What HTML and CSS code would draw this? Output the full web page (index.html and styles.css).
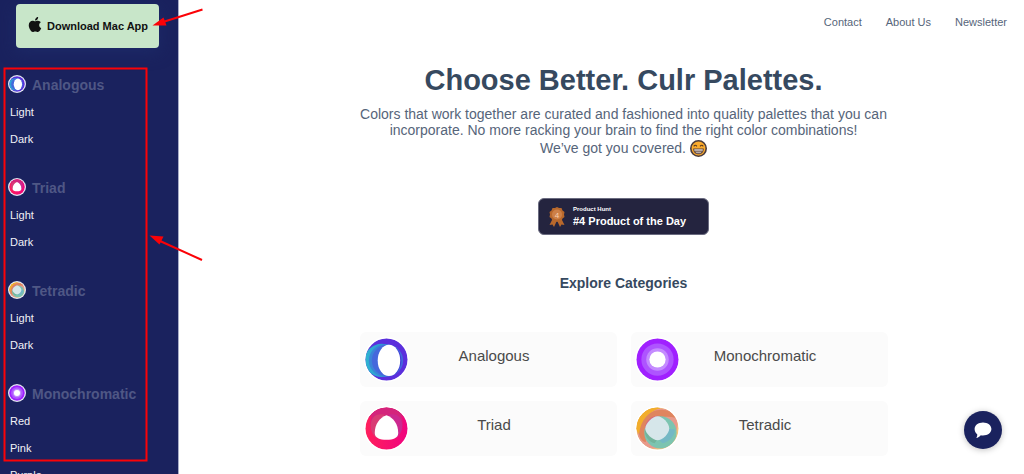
FILE: index.html
```html
<!DOCTYPE html>
<html lang="en">
<head>
  <meta charset="UTF-8" />
  <meta name="viewport" content="width=device-width, initial-scale=1.0">
  <title>Culr Palettes</title>
  <link rel="stylesheet" href="styles.css">
</head>
<body>

  <!-- Shared icons -->
  <svg class="sprite" aria-hidden="true">
    <defs>
      <linearGradient id="blueRing" x1="0" y1="0" x2="1" y2="0">
        <stop offset="0" stop-color="#2fb5d0" />
        <stop offset="1" stop-color="#2f7fd8" />
      </linearGradient>
      <linearGradient id="pinkRing" x1="0" y1="0" x2="1" y2="0">
        <stop offset="0" stop-color="#ff1f5c" />
        <stop offset="1" stop-color="#f0047f" />
      </linearGradient>
      <clipPath id="disc"><circle cx="22" cy="22" r="21.5" /></clipPath>
    </defs>
    <symbol id="analogous" viewBox="0 0 44 44">
      <circle cx="22" cy="22" r="21.5" fill="#5b2fdc" />
      <g clip-path="url(#disc)">
        <ellipse cx="17" cy="23" rx="17.5" ry="17" fill="url(#blueRing)" />
        <ellipse cx="21" cy="23" rx="17" ry="16.500" fill="#3a84d8" />
        <ellipse cx="23" cy="23" rx="16" ry="16" fill="#4468dc" />
        <path d="M30 9c9 6 10 20 1 28 4-8 4-20-1-28z" fill="#3f3fd8" />
      </g>
      <ellipse cx="24.500" cy="23" rx="11.500" ry="16" fill="#fff" />
    </symbol>
    <symbol id="triad" viewBox="0 0 44 44">
      <circle cx="22" cy="22" r="21.500" fill="url(#pinkRing)" />
      <g clip-path="url(#disc)">
        <path d="M3 12C9-3 35-3 41 12c-5-5-12-8-19-8S8 7 3 12z" fill="#d4247c" />
        <circle cx="22" cy="16" r="16.500" fill="#d4247c" />
        <path d="M6 17C7 9 13 6 21 8 12 13 9 22 12 32 7 28 5 22 6 17z" fill="#d83c74" />
        <path d="M38 17C37 9 31 6 23 8c9 5 12 14 9 24 5-4 7-10 6-15z" fill="#cc2890" />
      </g>
      <path d="M22 8.500c7 2.500 12 9 12 18 0 5-5 7-12 7s-12-2-12-7c0-9 5-15.500 12-18z" fill="#fff" />
    </symbol>
    <symbol id="monochromatic" viewBox="0 0 44 44">
      <circle cx="22" cy="22" r="21.500" fill="#a020ff" />
      <circle cx="22" cy="22" r="16.500" fill="#ae54ff" />
      <circle cx="22" cy="22" r="11.500" fill="#c48bff" />
      <circle cx="22" cy="22" r="8.300" fill="#fff" />
    </symbol>
    <symbol id="tetradic" viewBox="0 0 44 44">
      <circle cx="22" cy="22" r="21.500" fill="#f2c37c" />
      <g clip-path="url(#disc)">
        <path d="M0 22C0 6 12-2 25 1L9 17 3 30z" fill="#f2ad2c" />
        <circle cx="26" cy="18" r="16.500" fill="#e89a8c" />
        <circle cx="18" cy="26" r="16.500" fill="#e89a8c" />
        <path d="M3 27C3 14 13 2 28 3c7 0 10 4 12 8-14-4-28 2-30 25-4-1-6-4-7-9z" fill="#df855e" />
        <path d="M0 22C0 6 12-2 25 1 14 4 5 12 3 28z" fill="#f2ad2c" />
        <circle cx="25" cy="26" r="16.500" fill="#7cc4b0" />
        <path d="M9 22c1-8 6-13 14-13-3 3-8 8-9 13z" fill="#d66a80" />
        <path d="M33 22l7 1c-1 8-7 13-13 14l-4-4c6-1 9-5 10-11z" fill="#74b8c4" />
        <path d="M9 24c0 7 5 12 10 13l3-4c-6-1-9-5-11-11z" fill="#72b49c" />
      </g>
      <path d="M22 9.500c5 0 12 7 12 12.500S27 34 22 34 9.500 27 9.500 22 17 9.500 22 9.500z" fill="#d6e6ea" />
    </symbol>
  </svg>

  <aside class="sidebar">
    <button class="download" type="button">
      <svg class="apple" viewBox="0 0 384 512" aria-hidden="true">
        <path fill="currentColor" d="M319 269c0-37 16-64 50-84-19-27-47-42-85-45-36-3-75 21-89 21-15 0-50-20-77-20C62 142 4 186 4 275c0 26 5 54 14 82 13 37 59 127 107 125 25-1 43-18 76-18 32 0 48 18 76 18 49-1 90-82 102-119-65-31-60-91-60-94zM262 105c27-33 25-62 24-73-24 1-52 16-68 35-17 20-28 45-25 72 26 2 49-11 69-34z" />
      </svg>
      Download Mac App
    </button>

    <nav class="groups" aria-label="Palettes">
      <section class="group">
        <h3><svg class="dot"><use href="#analogous" /></svg>Analogous</h3>
        <ul>
          <li><a href="#">Light</a></li>
          <li><a href="#">Dark</a></li>
        </ul>
      </section>
      <section class="group">
        <h3><svg class="dot"><use href="#triad" /></svg>Triad</h3>
        <ul>
          <li><a href="#">Light</a></li>
          <li><a href="#">Dark</a></li>
        </ul>
      </section>
      <section class="group">
        <h3><svg class="dot"><use href="#tetradic" /></svg>Tetradic</h3>
        <ul>
          <li><a href="#">Light</a></li>
          <li><a href="#">Dark</a></li>
        </ul>
      </section>
      <section class="group">
        <h3><svg class="dot"><use href="#monochromatic" /></svg>Monochromatic</h3>
        <ul>
          <li><a href="#">Red</a></li>
          <li><a href="#">Pink</a></li>
          <li><a href="#">Purple</a></li>
        </ul>
      </section>
    </nav>
  </aside>

  <div class="page">
    <nav class="top-nav">
      <a href="#">Contact</a>
      <a href="#">About Us</a>
      <a href="#">Newsletter</a>
    </nav>

    <main class="content">
      <h1>Choose Better. Culr Palettes.</h1>
      <p class="intro">Colors that work together are curated and fashioned into quality palettes that you can incorporate. No more racking your brain to find the right color combinations!</p>
      <p class="covered">
        We’ve got you covered.
        <svg class="grin" viewBox="0 0 32 32" aria-hidden="true">
          <circle cx="16" cy="16" r="14.500" fill="#fbab2c" stroke="#4a3b3d" stroke-width="3" />
          <path d="M7 12q3-4 6 0M19 12q3-4 6 0" fill="none" stroke="#5a3a20" stroke-width="2" />
          <path d="M6 16h20c0 7-4 11-10 11S6 23 6 16z" fill="#5b4038" />
          <path d="M8 17h16v4H8zM10 22h12l-2 3h-8z" fill="#b8aaa4" />
        </svg>
      </p>

      <a class="badge" href="#">
        <svg class="medal" viewBox="0 0 32 40" aria-hidden="true">
          <path d="M8 22L1 36l6-1 3 5 6-13 6 13 3-5 6 1-7-14z" fill="#b8682c" />
          <path d="M16 0l4 2 5 0 2 5 4 3-1 5 1 5-4 3-2 5-5 0-4 2-4-2-5 0-2-5-4-3 1-5-1-5 4-3 2-5 5 0z" fill="#b8682c" />
          <circle cx="16" cy="15" r="10" fill="#cd8048" />
          <text x="16" y="21" text-anchor="middle">4</text>
        </svg>
        <span class="badge-text">
          <small>Product Hunt</small>
          <strong>#4 Product of the Day</strong>
        </span>
      </a>

      <h2>Explore Categories</h2>
      <div class="cards">
        <a class="card" href="#"><svg><use href="#analogous" /></svg><span>Analogous</span></a>
        <a class="card" href="#"><svg><use href="#monochromatic" /></svg><span>Monochromatic</span></a>
        <a class="card" href="#"><svg><use href="#triad" /></svg><span>Triad</span></a>
        <a class="card" href="#"><svg><use href="#tetradic" /></svg><span>Tetradic</span></a>
      </div>
    </main>
  </div>

  <button class="chat" type="button" aria-label="Chat">
    <svg viewBox="0 0 18 18" aria-hidden="true">
      <path fill="#fff" d="M9 1.500c4.700 0 8.400 2.800 8.400 6.500s-3.700 6.500-8.400 6.500c-.8 0-1.500-.1-2.200-.2C5.600 15.600 4 16.800 2.200 17c.8-1 1.200-2.400 1-3.800C1.600 12 .6 10.200.6 8 .6 4.300 4.300 1.500 9 1.500z" />
    </svg>
  </button>

  <!-- Red callouts over the sidebar -->
  <svg class="callouts" width="210" height="474" viewBox="0 0 210 474" aria-hidden="true">
    <g fill="none" stroke="#fb0207" stroke-width="2">
      <rect x="4.500" y="68.500" width="142" height="392" />
      <path d="M202.500 9.500L163 22M202 260L160 241" />
    </g>
    <path fill="#fb0207" d="M152.500 25.500l11-8 3 8zM149.500 235.500l14 1-4 8z" />
  </svg>

</body>
</html>
```

FILE: styles.css
```css
* {
  margin: 0;
  padding: 0;
  box-sizing: border-box;
}

body {
  display: flex;
  min-height: 100vh;
  background-color: #fff;
  color: #36495f;
  font-family: "Liberation Sans", Arial, Helvetica, sans-serif;
}

a {
  color: inherit;
  text-decoration: none;
}

button {
  border: 0;
  font-family: inherit;
  cursor: pointer;
}

.sprite {
  position: absolute;
  width: 0;
  height: 0;
}

/* Sidebar */
.sidebar {
  flex: none;
  width: 179px;
  height: 100vh;
  padding-top: 4px;
  overflow: hidden;
  background-color: #1a225e;
  border-right: 1px solid #a9adc8;
}

.download {
  display: flex;
  align-items: center;
  gap: 5px;
  height: 44px;
  margin-left: 16px;
  padding: 0 11px 0 12px;
  border-radius: 4px;
  background-color: #c8e6c9;
  box-shadow: 0 4px 16px #1d2a68;
  color: #111;
  font-size: 11px;
  font-weight: bold;
  white-space: nowrap;
}

.apple {
  width: 14px;
  height: 17px;
  margin-bottom: 4px;
}

.groups {
  padding: 27px 8px 0;
}

.group {
  margin-bottom: 25px;
}

.group h3 {
  display: flex;
  align-items: center;
  gap: 6px;
  height: 20px;
  margin-bottom: 4px;
  color: #4f5785;
  font-size: 14px;
}

.dot {
  width: 18px;
  height: 18px;
  margin-bottom: 2px;
  padding: 1px;
  border-radius: 50%;
  background-color: #e4e6f2;
}

.group ul {
  list-style: none;
  padding-left: 2px;
}

.group li {
  color: #f1f1f6;
  font-size: 11px;
  line-height: 27px;
}

/* Main */
.page {
  flex: 1;
}

.top-nav {
  display: flex;
  justify-content: flex-end;
  gap: 24px;
  padding: 14px 17px 0;
  color: #56657a;
  font-size: 11px;
  line-height: 16px;
}

.content {
  display: flex;
  flex-direction: column;
  align-items: center;
  padding: 33px 0 18px 44px;
  text-align: center;
}

h1 {
  font-size: 29px;
  line-height: 34px;
}

.intro,
.covered {
  max-width: 528px;
  color: #56657a;
  font-size: 14px;
  line-height: 16px;
}

.intro {
  margin-top: 9px;
}

.covered {
  display: flex;
  align-items: center;
  gap: 4px;
  line-height: 20px;
}

.grin {
  width: 17px;
  height: 17px;
}

.badge {
  display: flex;
  align-items: center;
  gap: 8px;
  width: 171px;
  height: 37px;
  margin-top: 40px;
  padding-left: 10px;
  border: 1px solid #6a6b80;
  border-radius: 6px;
  background-color: #24243f;
  color: #fff;
  text-align: left;
}

.medal {
  width: 16px;
  height: 20px;
}

.medal text {
  fill: #fbd3b0;
  font-size: 16px;
}

.badge-text small,
.badge-text strong {
  display: block;
}

.badge-text small {
  font-size: 6px;
  font-weight: bold;
  line-height: 8px;
}

.badge-text strong {
  font-size: 11px;
  line-height: 16px;
}

h2 {
  margin-top: 38px;
  font-size: 14px;
  line-height: 20px;
}

.cards {
  display: grid;
  grid-template-columns: 1fr 1fr;
  gap: 14px;
  width: 100%;
  max-width: 528px;
  margin-top: 39px;
}

.card {
  display: flex;
  align-items: center;
  height: 55px;
  padding: 0 36px 0 5px;
  border-radius: 6px;
  background-color: #fbfbfb;
  color: #4a4a4a;
  font-size: 15px;
}

.card svg {
  width: 43px;
  height: 43px;
  border-radius: 50%;
  background-color: #fff;
  box-shadow: 0 0 0 1px #fff;
}

.card span {
  flex: 1;
  padding-bottom: 8px;
}

/* Floating chat button */
.chat {
  display: flex;
  align-items: center;
  justify-content: center;
  position: fixed;
  right: 22px;
  bottom: 25px;
  width: 38px;
  height: 38px;
  border-radius: 50%;
  background-color: #1a225e;
  box-shadow: 0 1px 6px rgba(0, 0, 0, 0.25);
}

.chat svg {
  width: 18px;
  height: 18px;
}

.callouts {
  position: absolute;
  top: 0;
  left: 0;
  pointer-events: none;
}
```
